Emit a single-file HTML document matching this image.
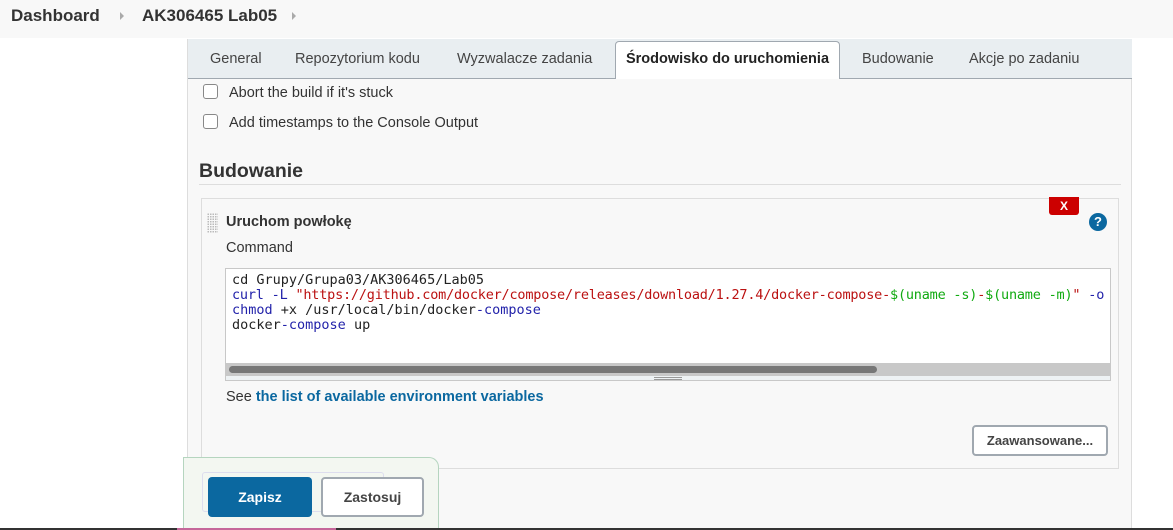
<!DOCTYPE html>
<html style="overflow:hidden;height:530px"><head><meta charset="utf-8"><style>
*{box-sizing:border-box;margin:0;padding:0}
body{width:1173px;height:530px;overflow:hidden;background:#fff;font-family:"Liberation Sans","DejaVu Sans",sans-serif;color:#333;position:relative}
.hdr{position:absolute;left:0;top:0;width:1173px;height:38px;background:#f8f8f8}
.hdr span{position:absolute;top:6px;font-weight:bold;font-size:17px;color:#333}
.arr{position:absolute;top:12px;width:0;height:0;border-left:4px solid #aaa;border-top:4px solid transparent;border-bottom:4px solid transparent}
.main{position:absolute;left:187px;top:39px;width:945px;height:491px;background:#f8f8f8;border-left:1px solid #ddd;border-right:1px solid #ddd}
.tabs{position:absolute;left:0;top:0;width:944px;height:40px;background:#e9eef1;border-bottom:1px solid #a0a8b0}
.tab{position:absolute;top:12px;font-size:14.5px;color:#444}
.act{position:absolute;left:427px;top:2px;width:225px;height:38px;background:#fff;border:1px solid #a0a8b0;border-bottom:none;border-radius:4px 4px 0 0;font-weight:bold;font-size:14.5px;color:#222;text-align:center;padding-top:9px}
.cb{position:absolute;width:15px;height:15px;border:1px solid #888;border-radius:3px;background:#fff}
.lbl{position:absolute;font-size:14.5px;color:#333}
.code{font-family:"DejaVu Sans Mono",monospace;font-size:13.5px;line-height:15px;white-space:pre;color:#222}
.btn{position:absolute;border-radius:4px;font-weight:bold;font-size:14px;text-align:center}
</style></head><body>
<div class="hdr">
<span style="left:11px">Dashboard</span><div class="arr" style="left:120px"></div>
<span style="left:142px">AK306465 Lab05</span><div class="arr" style="left:292px"></div>
</div>
<div class="main">
<div class="tabs">
<div class="tab" style="left:22px">General</div>
<div class="tab" style="left:107px">Repozytorium kodu</div>
<div class="tab" style="left:269px">Wyzwalacze zadania</div>
<div class="act">Środowisko do uruchomienia</div>
<div class="tab" style="left:674px">Budowanie</div>
<div class="tab" style="left:781px">Akcje po zadaniu</div>
</div>
<div class="cb" style="left:15px;top:45px"></div><div class="lbl" style="left:41px;top:46px">Abort the build if it's stuck</div>
<div class="cb" style="left:15px;top:75px"></div><div class="lbl" style="left:41px;top:76px">Add timestamps to the Console Output</div>
<div style="position:absolute;left:11px;top:121px;font-weight:bold;font-size:19.5px;color:#333">Budowanie</div>
<div style="position:absolute;left:11px;top:145px;width:922px;height:1px;background:#ddd"></div>
<div style="position:absolute;left:13px;top:159px;width:918px;height:271px;border:1px solid #ddd;background:#f8f8f8">
 <div style="position:absolute;left:5px;top:14px;width:11px;height:20px;background-image:radial-gradient(#bbb 0.8px,transparent 0.9px);background-size:2.5px 2.5px"></div>
 <div style="position:absolute;left:24px;top:15px;font-weight:bold;font-size:14.5px;color:#333">Uruchom powłokę</div>
 <div style="position:absolute;left:24px;top:41px;font-size:14.5px;color:#333">Command</div>
 <div style="position:absolute;left:847px;top:-2px;width:30px;height:18px;background:#c00;border-radius:0 0 3px 3px;color:#fff;font-size:12px;font-weight:bold;text-align:center;line-height:18px">X</div>
 <div style="position:absolute;left:887px;top:14px;width:18px;height:18px;border-radius:50%;background:#0b68a0;color:#fff;font-size:13px;font-weight:bold;text-align:center;line-height:18px">?</div>
 <div style="position:absolute;left:23px;top:69px;width:886px;height:113px;border:1px solid #c8c8c8;background:#fff;overflow:hidden">
  <div class="code" style="position:absolute;left:6px;top:4px">cd Grupy/Grupa03/AK306465/Lab05
<span style="letter-spacing:-0.2px"><span style="color:#22a">curl -L</span> <span style="color:#b11">"https://github.com/docker/compose/releases/download/1.27.4/docker-compose-</span><span style="color:#1a1">$(uname -s)</span><span style="color:#b11">-</span><span style="color:#1a1">$(uname -m)</span><span style="color:#b11">"</span> <span style="color:#22a">-o</span></span>
<span style="color:#22a">chmod</span> +x /usr/local/bin/docker<span style="color:#22a">-compose</span>
docker<span style="color:#22a">-compose</span> up</div>
  <div style="position:absolute;left:0;top:94px;width:886px;height:13px;background:#c8c8c8"></div>
  <div style="position:absolute;left:3px;top:97px;width:648px;height:7px;background:#777;border-radius:4px"></div>
  <div style="position:absolute;left:0;top:107px;width:886px;height:6px;background:#eef2f4"></div>
  <div style="position:absolute;left:428px;top:108px;width:28px;height:3px;border-top:1px solid #999;border-bottom:1px solid #999"></div>
 </div>
 <div style="position:absolute;left:24px;top:190px;font-size:14.5px;color:#333">See <b style="color:#0b68a0">the list of available environment variables</b></div>
 <div class="btn" style="left:770px;top:226px;width:136px;height:31px;border:2px solid #a0a8b0;background:#fff;color:#444;font-size:13px;line-height:27px">Zaawansowane...</div>
</div>
</div>
<div style="position:absolute;left:183px;top:457px;width:256px;height:73px;background:#f3f7f1;border:1px solid #b5d5bf;border-bottom:none;border-radius:0 10px 0 0"></div>
<div style="position:absolute;left:202px;top:472px;width:182px;height:40px;border:1px solid #dde;border-radius:3px"></div>
<div class="btn" style="left:208px;top:477px;width:104px;height:40px;background:#0b68a0;color:#fff;line-height:40px">Zapisz</div>
<div class="btn" style="left:321px;top:477px;width:103px;height:40px;background:#fff;border:2px solid #a0a8b0;color:#444;line-height:36px">Zastosuj</div>
<div style="position:absolute;left:0;top:528px;width:1173px;height:2px;background:#333"></div>
<div style="position:absolute;left:177px;top:528px;width:159px;height:2px;background:#c5679a"></div>
</body></html>
